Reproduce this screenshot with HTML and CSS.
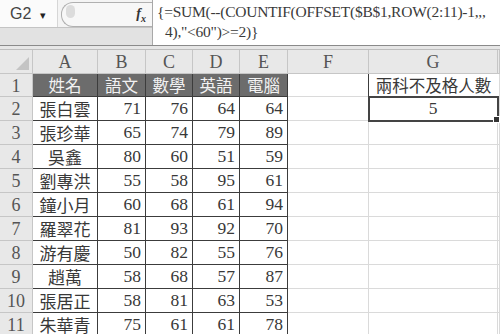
FILE: index.html
```html
<!DOCTYPE html>
<html lang="zh-Hant">
<head>
    <meta charset="UTF-8">
    <title>Excel - 兩科不及格人數</title>
    <link rel="stylesheet" href="styles.css">
</head>
<body>
    <!-- Formula bar -->
    <div class="fbar">
        <div class="fbar-left">
            <div class="fbar-top">
                <div class="namebox">G2 <span class="drop">&#9662;</span></div>
                <div class="capsule">
                    <span class="knob"></span>
                    <span class="fx">f<sub>x</sub></span>
                </div>
            </div>
            <div class="fbar-band"></div>
        </div>
        <div class="formula">
            <div>{=SUM(--(COUNTIF(OFFSET($B$1,ROW(2:11)-1,,,</div>
            <div class="indent">4),"&lt;60")&gt;=2)}</div>
        </div>
    </div>
    <div class="sep"></div>

    <!-- Sheet -->
    <div class="sheet">
        <div class="hd corner"><span class="tri"></span></div>
        <div class="hd">A</div>
        <div class="hd">B</div>
        <div class="hd">C</div>
        <div class="hd">D</div>
        <div class="hd">E</div>
        <div class="hd">F</div>
        <div class="hd">G</div>
        <div class="hd"></div>

        <div class="rh">1</div>
        <div class="c dark title">姓名</div>
        <div class="c dark title">語文</div>
        <div class="c dark title">數學</div>
        <div class="c dark title">英語</div>
        <div class="c dark title">電腦</div>
        <div class="c edge"></div>
        <div class="c label">兩科不及格人數</div>
        <div class="c"></div>

        <div class="rh">2</div>
        <div class="c dark name">張白雲</div>
        <div class="c dark num">71</div>
        <div class="c dark num">76</div>
        <div class="c dark num">64</div>
        <div class="c dark num">64</div>
        <div class="c edge"></div>
        <div class="c result">5</div>
        <div class="c"></div>

        <div class="rh">3</div>
        <div class="c dark name">張珍華</div>
        <div class="c dark num">65</div>
        <div class="c dark num">74</div>
        <div class="c dark num">79</div>
        <div class="c dark num">89</div>
        <div class="c"></div>
        <div class="c"></div>
        <div class="c"></div>

        <div class="rh">4</div>
        <div class="c dark name">吳鑫</div>
        <div class="c dark num">80</div>
        <div class="c dark num">60</div>
        <div class="c dark num">51</div>
        <div class="c dark num">59</div>
        <div class="c"></div>
        <div class="c"></div>
        <div class="c"></div>

        <div class="rh">5</div>
        <div class="c dark name">劉專洪</div>
        <div class="c dark num">55</div>
        <div class="c dark num">58</div>
        <div class="c dark num">95</div>
        <div class="c dark num">61</div>
        <div class="c"></div>
        <div class="c"></div>
        <div class="c"></div>

        <div class="rh">6</div>
        <div class="c dark name">鐘小月</div>
        <div class="c dark num">60</div>
        <div class="c dark num">68</div>
        <div class="c dark num">61</div>
        <div class="c dark num">94</div>
        <div class="c"></div>
        <div class="c"></div>
        <div class="c"></div>

        <div class="rh">7</div>
        <div class="c dark name">羅翠花</div>
        <div class="c dark num">81</div>
        <div class="c dark num">93</div>
        <div class="c dark num">92</div>
        <div class="c dark num">70</div>
        <div class="c"></div>
        <div class="c"></div>
        <div class="c"></div>

        <div class="rh">8</div>
        <div class="c dark name">游有慶</div>
        <div class="c dark num">50</div>
        <div class="c dark num">82</div>
        <div class="c dark num">55</div>
        <div class="c dark num">76</div>
        <div class="c"></div>
        <div class="c"></div>
        <div class="c"></div>

        <div class="rh">9</div>
        <div class="c dark name">趙萬</div>
        <div class="c dark num">58</div>
        <div class="c dark num">68</div>
        <div class="c dark num">57</div>
        <div class="c dark num">87</div>
        <div class="c"></div>
        <div class="c"></div>
        <div class="c"></div>

        <div class="rh">10</div>
        <div class="c dark name">張居正</div>
        <div class="c dark num">58</div>
        <div class="c dark num">81</div>
        <div class="c dark num">63</div>
        <div class="c dark num">53</div>
        <div class="c"></div>
        <div class="c"></div>
        <div class="c"></div>

        <div class="rh">11</div>
        <div class="c dark name">朱華青</div>
        <div class="c dark num">75</div>
        <div class="c dark num">61</div>
        <div class="c dark num">61</div>
        <div class="c dark num">78</div>
        <div class="c"></div>
        <div class="c"></div>
        <div class="c"></div>
    </div>
</body>
</html>
```

FILE: styles.css
```css
body, html {
    margin: 0;
    padding: 0;
    background-color: #ffffff;
    overflow: hidden;
    font-family: "Liberation Serif", "Noto Sans CJK TC", serif;
    color: #333;
}

/* Formula bar */
.fbar {
    display: flex;
    height: 46px;
    border-bottom: 1px solid #8a8a8a;
    box-sizing: border-box;
}

.fbar-left {
    width: 152px;
    display: flex;
    flex-direction: column;
}

.fbar-top {
    height: 28px;
    display: flex;
    background-color: #f4f4f4;
    border-bottom: 1px solid #c4c4c4;
    box-sizing: border-box;
}

.namebox {
    width: 58px;
    background-color: #fbfbfb;
    font-family: "Liberation Sans", sans-serif;
    font-size: 16px;
    color: #444;
    padding-left: 10px;
    line-height: 27px;
    box-sizing: border-box;
    border-right: 1px solid #d6d6d6;
}

.drop {
    font-size: 11px;
    margin-left: 4px;
    color: #222;
}

.capsule {
    flex: 1;
    margin: 2px 0 0 3px;
    border: 1px solid #b0b0b0;
    border-right: none;
    border-radius: 12px 0 0 12px;
    background-color: #f7f7f7;
    display: flex;
    align-items: center;
    justify-content: space-between;
    padding: 0 6px 0 4px;
}

.knob {
    width: 9px;
    height: 13px;
    border-radius: 5px;
    background-color: #dcdcdc;
    margin-top: -6px;
}

.fx {
    font-style: italic;
    font-weight: bold;
    font-size: 14px;
    color: #333;
}

.fx sub {
    font-size: 10px;
}

.fbar-band {
    flex: 1;
    background-color: #e2e2e2;
}

.formula {
    flex: 1;
    border-left: 1px solid #a8a8a8;
    background-color: #ffffff;
    padding: 2px 0 0 4px;
    font-size: 15.5px;
    letter-spacing: -0.25px;
    line-height: 20px;
    color: #3a3a3a;
    white-space: nowrap;
}

.indent {
    padding-left: 8px;
}

.sep {
    height: 4px;
    background-color: #e6e6e6;
    border-bottom: 1px solid #bdbdbd;
    box-sizing: border-box;
}

/* Sheet grid */
.sheet {
    display: grid;
    grid-template-columns: 33px 65px 48px 47px 47px 48px 81px 129px 1fr;
    grid-template-rows: 24px 23px;
    grid-auto-rows: 24px;
}

.hd, .rh {
    background-color: #e8e8e8;
    border-right: 1px solid #c6c6c6;
    border-bottom: 1px solid #c6c6c6;
    box-sizing: border-box;
    text-align: center;
    font-size: 18px;
    line-height: 24px;
    color: #555;
}

.corner {
    position: relative;
}

.tri {
    position: absolute;
    right: 3px;
    bottom: 3px;
    width: 0;
    height: 0;
    border-left: 13px solid transparent;
    border-bottom: 13px solid #c4c4c4;
}

.c {
    border-right: 1px solid #dadada;
    border-bottom: 1px solid #dadada;
    box-sizing: border-box;
    font-size: 16.5px;
    line-height: 23px;
    white-space: nowrap;
    color: #383838;
}

.dark {
    border-color: #3c3c3c;
}

.title {
    background-color: #6c6c6c;
    color: #f2f2f2;
    text-align: center;
    font-family: "Noto Sans CJK TC", sans-serif;
    font-size: 16.5px;
}

.name {
    text-align: center;
    font-family: "Noto Sans CJK TC", sans-serif;
    font-size: 17px;
}

.num {
    text-align: right;
    padding-right: 4px;
    font-size: 17.5px;
}

.edge {
    border-right-color: #3c3c3c;
}

.label {
    font-family: "Noto Sans CJK TC", sans-serif;
    font-size: 16.5px;
    text-align: center;
    overflow: hidden;
    border-right: none;
}

.result {
    position: relative;
    text-align: center;
    font-size: 17.5px;
    outline: 2px solid #444;
    outline-offset: -1px;
}

.result::after {
    content: "";
    position: absolute;
    right: -3px;
    bottom: -3px;
    width: 5px;
    height: 5px;
    background-color: #333;
    border: 1px solid #fff;
}
```
